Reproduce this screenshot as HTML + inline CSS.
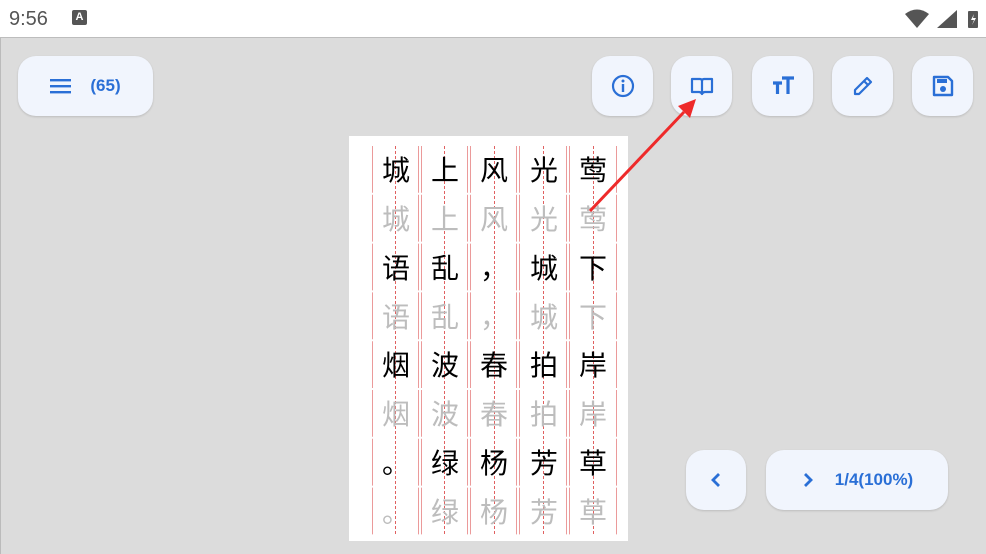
<!DOCTYPE html>
<html><head><meta charset="utf-8"><style>
body{margin:0;width:986px;height:554px;overflow:hidden;background:#dcdcdc;font-family:"Liberation Sans","Noto Sans CJK SC",sans-serif;position:relative}
.sb{position:absolute;left:0;top:0;width:986px;height:37px;background:#fff;border-bottom:1px solid #bdbdbd}
.btn{position:absolute;background:#f1f5fd;border-radius:18px;box-shadow:0 1px 2px rgba(0,0,0,.15);display:flex;align-items:center;justify-content:center;color:#2a6fd6;font-weight:bold;font-size:17px}
</style></head><body>
<div class="sb">
<div style="position:absolute;left:9px;top:8px;font-size:20px;color:#555">9:56</div>
<div style="position:absolute;left:72px;top:10px;width:15px;height:15px;background:#555;border-radius:2px;color:#fff;font-size:11px;font-weight:bold;text-align:center;line-height:14px">A</div>
<svg style="position:absolute;left:905px;top:8px" width="75" height="22">
<path d="M0 6 Q12 -3 24 6 L12 20Z" fill="#555"/>
<path d="M32 20 L52 2 L52 20Z" fill="#555"/>
<rect x="63" y="3" width="10" height="17" rx="1" fill="#555"/>
<path d="M69 6 L66 12 L69 12 L67 17 L71 10 L68 10Z" fill="#fff"/>
</svg>
</div>
<div style="position:absolute;left:0;top:38px;width:1px;height:516px;background:#bbb"></div>

<div class="btn" style="left:18px;top:56px;width:135px;height:60px">
<svg width="22" height="16" style="margin-right:18px"><rect x="0" y="1" width="21" height="2.4" fill="#2a6fd6"/><rect x="0" y="7" width="21" height="2.4" fill="#2a6fd6"/><rect x="0" y="13" width="21" height="2.4" fill="#2a6fd6"/></svg>(65)</div>

<div class="btn" style="left:592px;top:56px;width:61px;height:60px"><svg width="24" height="24"><circle cx="12" cy="12" r="10" fill="none" stroke="#2a6fd6" stroke-width="2.2"/><rect x="10.8" y="10" width="2.4" height="8" fill="#2a6fd6"/><circle cx="12" cy="7" r="1.5" fill="#2a6fd6"/></svg></div>
<div class="btn" style="left:671px;top:56px;width:61px;height:60px"><svg width="24" height="24"><path d="M2 5 H10 Q12 5 12 7 V20 Q11 18 9 18 H2Z M22 5 H14 Q12 5 12 7 V20 Q13 18 15 18 H22Z" fill="none" stroke="#2a6fd6" stroke-width="2.2" stroke-linejoin="round"/></svg></div>
<div class="btn" style="left:752px;top:56px;width:61px;height:60px"><svg width="24" height="24"><path d="M2 9 H11 M6.5 9 V20 M11 4 H23 M17 4 V20" stroke="#2a6fd6" stroke-width="3.2" fill="none"/></svg></div>
<div class="btn" style="left:832px;top:56px;width:61px;height:60px"><svg width="24" height="24"><path d="M4 20 L4 16 L16 4 L20 8 L8 20Z M13 7 L17 11" fill="none" stroke="#2a6fd6" stroke-width="2.2" stroke-linejoin="round"/></svg></div>
<div class="btn" style="left:912px;top:56px;width:61px;height:60px"><svg width="24" height="24"><path d="M3 3 H17 L21 7 V21 H3Z" fill="none" stroke="#2a6fd6" stroke-width="2.4" stroke-linejoin="round"/><rect x="6" y="5" width="10" height="4" fill="#2a6fd6"/><circle cx="12" cy="15" r="3" fill="#2a6fd6"/></svg></div>

<div class="btn" style="left:686px;top:450px;width:60px;height:60px"><svg width="14" height="16"><path d="M10 2 L4 8 L10 14" stroke="#2a6fd6" stroke-width="2.8" fill="none"/></svg></div>
<div class="btn" style="left:766px;top:450px;width:182px;height:60px"><svg width="14" height="16" style="margin-right:20px"><path d="M4 2 L10 8 L4 14" stroke="#2a6fd6" stroke-width="2.8" fill="none"/></svg>1/4(100%)</div>

<svg style="position:absolute;left:0;top:0" width="986" height="554" font-family="Liberation Sans, Noto Sans CJK SC, sans-serif">
<rect x="349" y="136" width="279" height="405" fill="#fff"/>
<g stroke="#eb9a9a" stroke-width="1" stroke-dasharray="46.8 2">
<line x1="372.5" x2="372.5" y1="146" y2="535"/>
<line x1="418.5" x2="418.5" y1="146" y2="535"/><line x1="421.5" x2="421.5" y1="146" y2="535"/>
<line x1="467.5" x2="467.5" y1="146" y2="535"/><line x1="470.5" x2="470.5" y1="146" y2="535"/>
<line x1="516.5" x2="516.5" y1="146" y2="535"/><line x1="519.5" x2="519.5" y1="146" y2="535"/>
<line x1="566.5" x2="566.5" y1="146" y2="535"/><line x1="569.5" x2="569.5" y1="146" y2="535"/>
<line x1="616.5" x2="616.5" y1="146" y2="535"/>
</g>
<g stroke="#e06060" stroke-width="1" stroke-dasharray="3 2">
<line x1="395.5" x2="395.5" y1="146" y2="535"/>
<line x1="444.5" x2="444.5" y1="146" y2="535"/>
<line x1="494.5" x2="494.5" y1="146" y2="535"/>
<line x1="543.5" x2="543.5" y1="146" y2="535"/>
<line x1="593.5" x2="593.5" y1="146" y2="535"/>
</g>
<g font-size="28" text-anchor="middle" fill="#000">
<text x="396" y="180">城</text><text x="445" y="180">上</text><text x="494" y="180">风</text><text x="544" y="180">光</text><text x="593" y="180">莺</text>
<text x="396" y="278">语</text><text x="445" y="278">乱</text><text x="494" y="278">，</text><text x="544" y="278">城</text><text x="593" y="278">下</text>
<text x="396" y="375">烟</text><text x="445" y="375">波</text><text x="494" y="375">春</text><text x="544" y="375">拍</text><text x="593" y="375">岸</text>
<text x="396" y="473">。</text><text x="445" y="473">绿</text><text x="494" y="473">杨</text><text x="544" y="473">芳</text><text x="593" y="473">草</text>
</g>
<g font-size="28" text-anchor="middle" fill="#bdbdbd">
<text x="396" y="229">城</text><text x="445" y="229">上</text><text x="494" y="229">风</text><text x="544" y="229">光</text><text x="593" y="229">莺</text>
<text x="396" y="327">语</text><text x="445" y="327">乱</text><text x="494" y="327">，</text><text x="544" y="327">城</text><text x="593" y="327">下</text>
<text x="396" y="424">烟</text><text x="445" y="424">波</text><text x="494" y="424">春</text><text x="544" y="424">拍</text><text x="593" y="424">岸</text>
<text x="396" y="522">。</text><text x="445" y="522">绿</text><text x="494" y="522">杨</text><text x="544" y="522">芳</text><text x="593" y="522">草</text>
</g>
<line x1="590" y1="211" x2="684" y2="112" stroke="#ee2a2a" stroke-width="3"/>
<path d="M696 99 L678 106 L690 118Z" fill="#ee2a2a"/>
</svg>
</body></html>
